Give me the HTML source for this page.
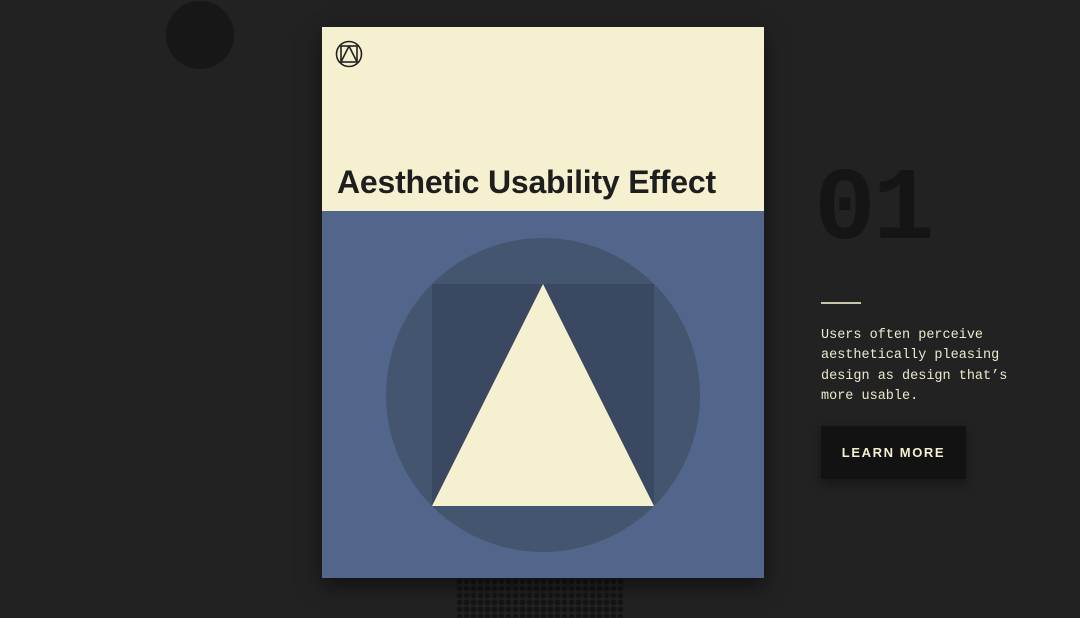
<!DOCTYPE html>
<html><head><style>
body{margin:0;width:1080px;height:611px;background:#222;overflow:hidden;position:relative;font-family:"Liberation Sans",sans-serif}
.dot{position:absolute;left:166px;top:1px;width:68px;height:68px;border-radius:50%;background:#171717}
.grid{position:absolute;left:456px;top:578px;width:168px;height:40px;background-image:radial-gradient(circle,#151515 2.6px,transparent 3px);background-size:7px 7px}
.card{position:absolute;left:322px;top:27px;width:442px;height:551px;background:#51668a;box-shadow:0 8px 20px rgba(0,0,0,.5)}
.top{position:absolute;left:0;top:0;width:442px;height:184px;background:#f5f0d0}
h1{position:absolute;left:15px;top:137px;margin:0;font-size:32px;font-weight:bold;color:#1e1e1e;white-space:nowrap;letter-spacing:-0.2px}
.num{position:absolute;left:814px;top:152px;font-family:"Liberation Mono",monospace;font-size:103px;font-weight:bold;color:#151515;letter-spacing:-3px}
.line{position:absolute;left:821px;top:302px;width:40px;height:2px;background:#c8c4a8}
.p{position:absolute;left:821px;top:326px;font-family:"Liberation Mono",monospace;font-size:13.5px;line-height:20.3px;color:#eee9cc;width:200px}
.btn{position:absolute;left:821px;top:426px;width:145px;height:53px;background:#121212;color:#f5f0d0;font-weight:bold;font-size:13px;letter-spacing:1.6px;text-align:center;line-height:54px;box-shadow:0 4px 10px rgba(0,0,0,.4)}
</style></head><body>
<div class="dot"></div>
<div class="grid"></div>
<div class="card">
<div class="top">
<svg style="position:absolute;left:13px;top:13px" width="28" height="28" viewBox="0 0 28 28" fill="none" stroke="#222" stroke-width="1.6"><circle cx="14" cy="14" r="12.5"/><rect x="6" y="6" width="16" height="16"/><path d="M14 6 L6 22 M14 6 L22 22"/></svg>
<h1>Aesthetic Usability Effect</h1>
</div>
<svg style="position:absolute;left:0;top:184px" width="442" height="367">
<circle cx="221" cy="184" r="157" fill="#44556f"/>
<rect x="110" y="73" width="222" height="222" fill="#3b4861"/>
<polygon points="221,73 110,295 332,295" fill="#f5f0d0"/>
</svg>
</div>
<div class="num">01</div>
<div class="line"></div>
<div class="p">Users often perceive aesthetically pleasing design as design that’s more usable.</div>
<div class="btn">LEARN MORE</div>
</body></html>
